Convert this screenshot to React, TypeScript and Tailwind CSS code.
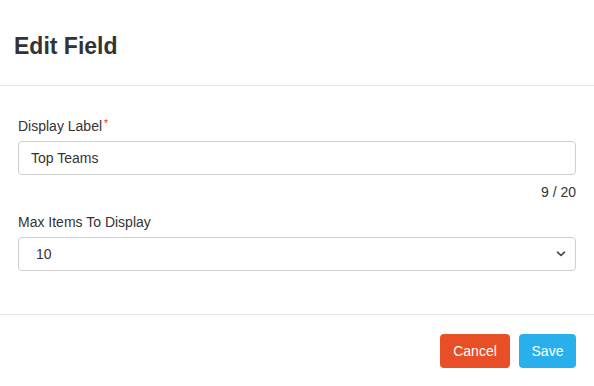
import React from "react";

export default function App() {
  return (
    <div
      className="w-[594px] h-[386px] bg-white text-[#333] overflow-hidden"
      style={{ fontFamily: '"Liberation Sans", Arial, Helvetica, sans-serif' }}
    >
      <div className="h-[86px] border-b border-[#e5e5e5] px-[14px] pt-[32px]">
        <h1 className="text-[23px] leading-[28px] font-bold text-[#333]">Edit Field</h1>
      </div>
      <div className="px-[18px] pt-[30px] h-[228px]">
        <label className="block text-[14px] leading-[20px] mb-[5px]">
          Display Label<span className="text-[#e02020] text-[10px] align-top ml-[2px] relative top-[-2px]">*</span>
        </label>
        <div className="h-[34px] border border-[#cfcfcf] rounded-[4px] flex items-center pl-[12px] text-[14px]">
          Top Teams
        </div>
        <div className="text-right text-[14px] leading-[20px] mt-[7px]">9 / 20</div>
        <label className="block text-[14px] leading-[20px] mt-[10px] mb-[5px]">Max Items To Display</label>
        <div className="h-[34px] border border-[#cfcfcf] rounded-[4px] flex items-center justify-between pl-[17px] pr-[8px] text-[14px]">
          <span>10</span>
          <svg width="10" height="6" viewBox="0 0 10 6" className="mr-[1px]">
            <path d="M1.5 1.2 L5 4.5 L8.5 1.2" fill="none" stroke="#444" strokeWidth="1.6" strokeLinecap="round" strokeLinejoin="round" />
          </svg>
        </div>
      </div>
      <div className="border-t border-[#e5e5e5] pt-[19px] px-[18px] flex justify-end gap-[9px]">
        <button className="h-[34px] w-[70px] rounded-[4px] bg-[#e84f26] text-white text-[14px]">Cancel</button>
        <button className="h-[34px] w-[57px] rounded-[4px] bg-[#29b0ec] text-white text-[14px]">Save</button>
      </div>
    </div>
  );
}
